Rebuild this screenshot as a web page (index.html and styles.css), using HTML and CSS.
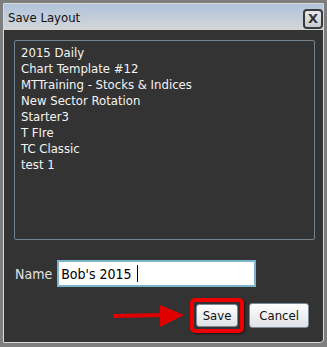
FILE: index.html
```html
<!DOCTYPE html>
<html lang="en">
  <head>
    <meta charset="UTF-8" />
    <meta name="viewport" content="width=device-width, initial-scale=1.0" />
    <title>Save Layout</title>
    <link rel="stylesheet" href="styles.css">
  </head>

  <body>
    <div class="dialog">
      <div class="title-bar">
        <span class="title">Save Layout</span>
        <button class="close-btn" type="button">X</button>
      </div>

      <div class="dialog-body">
        <ul class="layout-list">
          <li>2015 Daily</li>
          <li>Chart Template #12</li>
          <li>MTTraining - Stocks &amp; Indices</li>
          <li>New Sector Rotation</li>
          <li>Starter3</li>
          <li>T FIre</li>
          <li>TC Classic</li>
          <li>test 1</li>
        </ul>

        <div class="name-row">
          <label for="layoutName">Name</label>
          <div class="name-input">
            <span class="name-value">Bob's 2015</span><span class="caret"></span>
          </div>
        </div>

        <div class="button-row">
          <!-- annotation arrow -->
          <svg class="arrow" width="72" height="24" viewBox="0 0 72 24">
            <path d="M1 12 L50 11" stroke="#e00000" stroke-width="4" stroke-linecap="round" />
            <path d="M47 1 L71 11 L47 23 Z" fill="#e00000" />
          </svg>
          <div class="highlight">
            <button class="btn" type="button">Save</button>
          </div>
          <button class="btn btn-cancel" type="button">Cancel</button>
        </div>
      </div>
    </div>
  </body>
</html>
```

FILE: styles.css
```css
body {
  margin: 0;
  background-color: #7e7e7e;
  font-family: "DejaVu Sans Condensed", "DejaVu Sans", Verdana, sans-serif;
  font-size: 12px;
}

.dialog {
  margin: 3px 3px 0 3px;
  width: 319px;
  height: 338px;
  border: 1px solid #d9d9d9;
  border-radius: 0 0 4px 0;
  display: flex;
  flex-direction: column;
  background-color: #333333;
}

.title-bar {
  height: 26px;
  display: flex;
  align-items: center;
  justify-content: space-between;
  padding: 0 0 0 4px;
  background: linear-gradient(#b0c4dc, #d4d6d8);
}

.title {
  color: #111;
  font-size: 13px;
}

.close-btn {
  width: 20px;
  height: 20px;
  margin: 3px 0 0 0;
  padding: 0;
  border: 2px solid #3a3a3a;
  border-radius: 4px;
  background: linear-gradient(#e4e8ee, #c8ccd0);
  color: #333;
  font-family: "DejaVu Sans", sans-serif;
  font-weight: bold;
  font-size: 13px;
  line-height: 16px;
}

.dialog-body {
  flex: 1;
  padding: 10px 8px 0 10px;
  display: flex;
  flex-direction: column;
}

.layout-list {
  list-style: none;
  margin: 0;
  padding: 4px 6px;
  height: 190px;
  border: 1px solid #73828f;
  border-radius: 2px;
  color: #f4f4f4;
  line-height: 16px;
  font-size: 13px;
}

.name-row {
  display: flex;
  align-items: center;
  margin-top: 20px;
  padding-left: 1px;
}

.name-row label {
  color: #e2e2e2;
  font-size: 14px;
  margin-right: 5px;
}

.name-input {
  width: 193px;
  height: 23px;
  border: 2px solid #7cb4cc;
  background-color: #fff;
  display: flex;
  align-items: center;
  padding-left: 2px;
  font-size: 14px;
  color: #000;
}

.caret {
  display: inline-block;
  width: 1px;
  height: 17px;
  margin-left: 5px;
  background-color: #000;
}

.button-row {
  display: flex;
  align-items: center;
  justify-content: flex-end;
  margin-top: 11px;
  padding-right: 6px;
}

.arrow {
  margin-right: 5px;
}

.highlight {
  padding: 2px;
  border: 4px solid #ee0000;
  border-radius: 5px;
  box-shadow: 1px 1px 2px rgba(0, 0, 0, 0.6);
  margin-right: 5px;
}

.btn {
  height: 23px;
  padding: 0 6px;
  border: 1px solid #7d8a96;
  border-radius: 3px;
  background: linear-gradient(#ffffff, #dfe2e6);
  color: #111;
  font-family: "DejaVu Sans Condensed", "DejaVu Sans", sans-serif;
  font-size: 13px;
}

.btn-cancel {
  height: 25px;
  padding: 0 9px;
}
```
